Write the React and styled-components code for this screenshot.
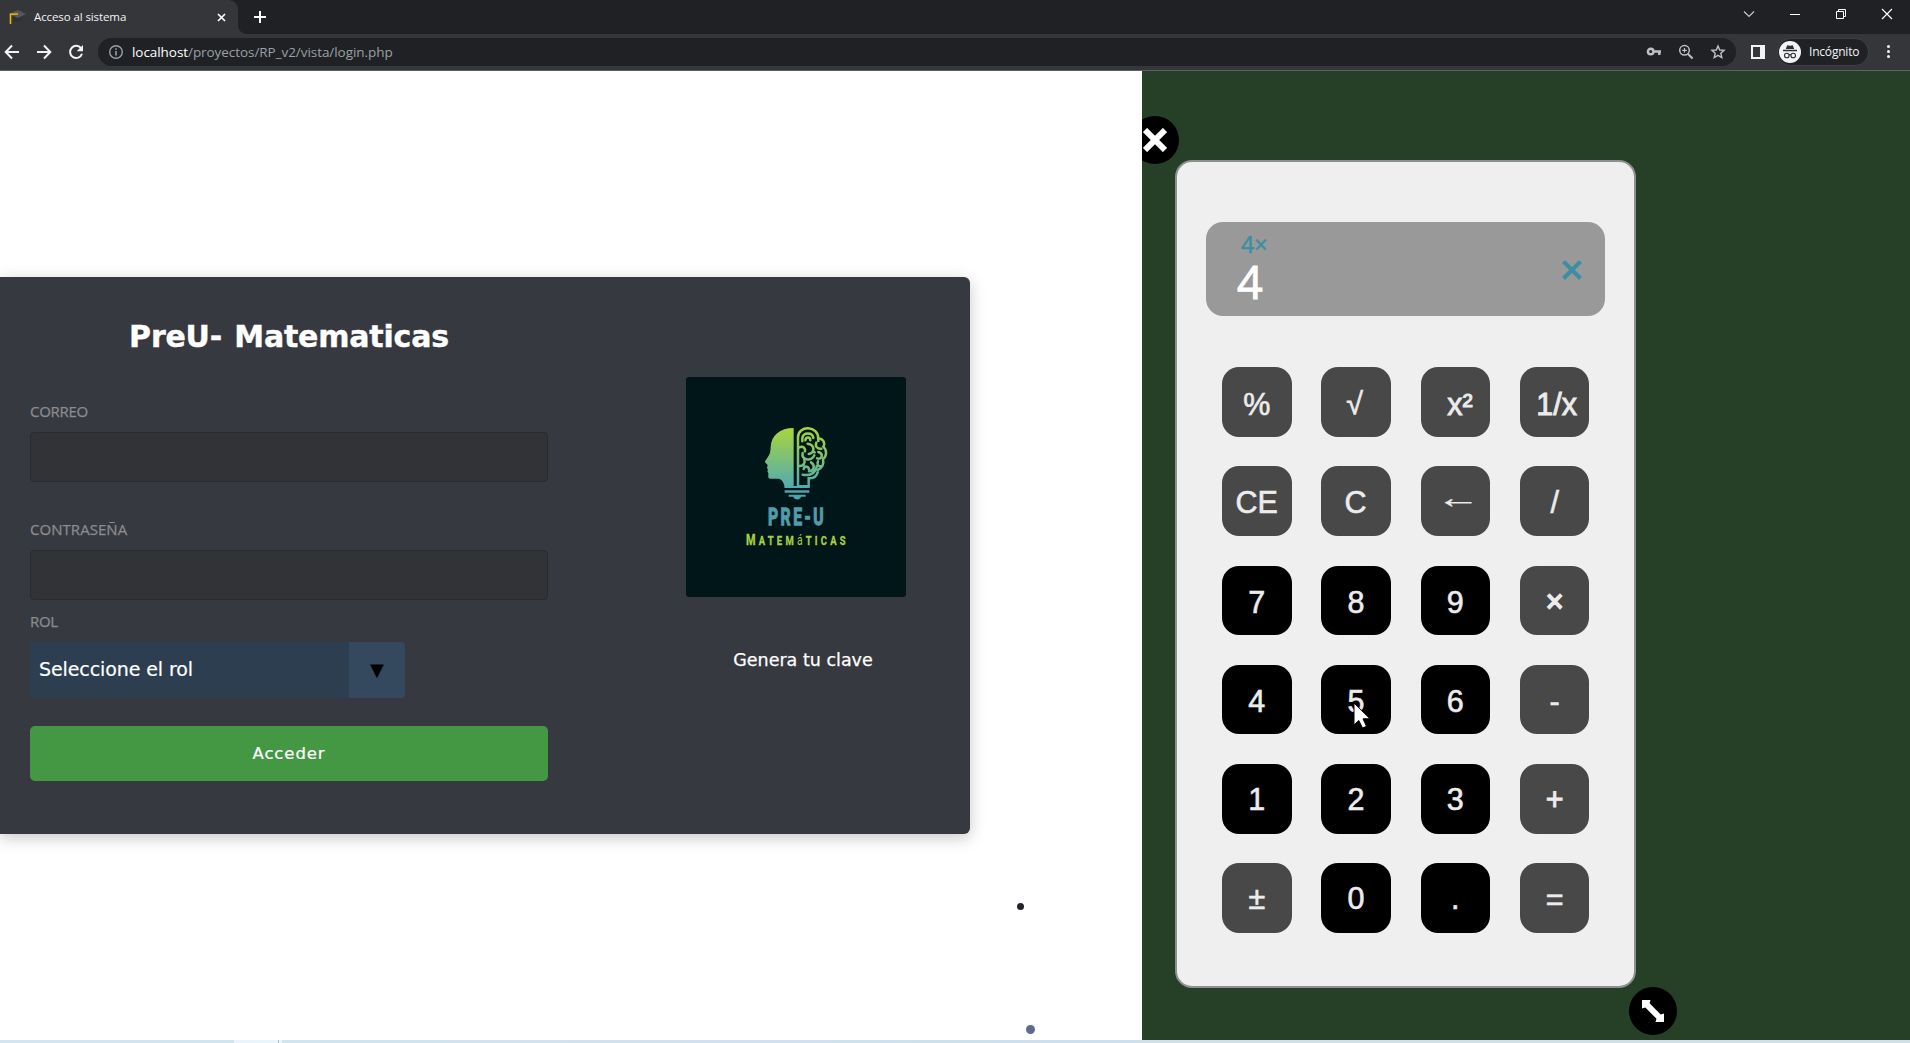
import React from "react";
import styled, { createGlobalStyle } from "styled-components";

const uiFont = `"Open Sans", "Noto Sans", sans-serif`;
const wideFont = `"DejaVu Sans", "Liberation Sans", sans-serif`;

const GlobalStyle = createGlobalStyle`
  * { box-sizing: border-box; }
  body { margin: 0; background: #fff; overflow: hidden; }
  svg { display: block; flex: none; }
  button { font: inherit; border: 0; padding: 0; margin: 0; }
`;

const Window = styled.div`
  display: grid;
  grid-template-rows: 34px 37px 1fr 3px;
  width: 1910px;
  height: 1043px;
  overflow: hidden;
  font-family: ${uiFont};
`;

/* Browser chrome */
const TabStrip = styled.header`
  display: flex;
  align-items: stretch;
  background: #202124;
`;
const Tab = styled.div`
  position: relative;
  display: flex;
  align-items: center;
  width: 238px;
  padding: 0 12px 0 8px;
  background: #35363a;
  border-radius: 0 9px 0 0;
  &::after {
    content: "";
    position: absolute;
    left: 100%;
    bottom: 0;
    width: 8px;
    height: 8px;
    background: radial-gradient(circle at 100% 0, transparent 7.5px, #35363a 8px);
  }
`;
const TabTitle = styled.span`
  flex: 1;
  margin-left: 8px;
  color: #f1f3f4;
  font-size: 11.5px;
  letter-spacing: -0.1px;
  line-height: 16px;
  white-space: nowrap;
`;
const NewTab = styled.div`
  display: flex;
  align-items: center;
  margin-left: 16px;
`;
const WindowControls = styled.div`
  display: flex;
  align-items: flex-start;
  margin-left: auto;
`;
const Control = styled.div`
  display: flex;
  justify-content: center;
  width: 46px;
  padding-top: 8px;
`;

const Toolbar = styled.div`
  display: flex;
  align-items: center;
  padding: 0 14px 1px 4px;
  background: #35363a;
  border-bottom: 1px solid #5f6064;
`;
const NavIcons = styled.div`
  display: flex;
  gap: 16px;
  width: 94px;
`;
const Omnibox = styled.div`
  display: flex;
  align-items: center;
  width: 1638px;
  height: 28px;
  padding: 0 10px;
  border-radius: 14px;
  background: #202124;
`;
const Url = styled.span`
  flex: 1;
  margin-left: 8px;
  color: #9aa0a6;
  font-size: 13.5px;
  letter-spacing: -0.06px;
  line-height: 20px;
  & > b { color: #fff; font-weight: 400; }
`;
const OmniActions = styled.div`
  display: flex;
  gap: 16px;
`;
const PanelIcon = styled.div`
  width: 14px;
  height: 14px;
  margin: 0 12px 0 15px;
  border: 2px solid #f1f3f4;
  border-right-width: 5px;
`;
const Incognito = styled.div`
  display: flex;
  align-items: center;
  gap: 8px;
  width: 92px;
  height: 28px;
  padding-left: 1px;
  border: 1px solid #3e3f43;
  border-radius: 14px;
  background: #202124;
  color: #f1f3f4;
  font-size: 12px;
  letter-spacing: -0.2px;
`;
const MenuDots = styled.div`
  display: grid;
  gap: 2px;
  margin-left: 18px;
  & > i { width: 3px; height: 3px; border-radius: 50%; background: #f1f3f4; }
`;

/* Page */
const Page = styled.main`
  display: grid;
  grid-template-columns: 1142px 1fr;
  min-height: 0;
`;
const LoginArea = styled.section`
  position: relative;
  padding-top: 206px;
  background: #fff;
  overflow: hidden;
`;
const Particle = styled.i`
  position: absolute;
  left: ${(p) => p.$x}px;
  top: ${(p) => p.$y}px;
  width: ${(p) => p.$size}px;
  height: ${(p) => p.$size}px;
  border-radius: 50%;
  background: ${(p) => p.$color};
`;
const Card = styled.div`
  display: flex;
  justify-content: space-between;
  width: 970px;
  height: 557px;
  padding: 0 64px 0 30px;
  border-radius: 0 6px 6px 0;
  background: #373941;
  box-shadow: 0 4px 16px rgba(0, 0, 0, 0.22);
`;
const Form = styled.form`
  width: 518px;
  padding-top: 40px;
`;
const Title = styled.h1`
  margin: 0 0 45px;
  color: #fff;
  font: 700 30px/40px ${wideFont};
  letter-spacing: -0.2px;
  word-spacing: 2px;
  text-align: center;
  -webkit-text-stroke: 0.4px #fff;
`;
const Label = styled.label`
  display: block;
  height: 18px;
  margin-bottom: ${(p) => p.$gap}px;
  color: #8b8c8f;
  font-size: 15px;
  line-height: 18px;
  letter-spacing: ${(p) => p.$spacing}px;
  -webkit-text-stroke: 0.25px #8b8c8f;
`;
const Input = styled.input`
  display: block;
  width: 100%;
  height: 50px;
  margin-bottom: ${(p) => p.$after}px;
  border: 1px solid #2a2b2e;
  border-radius: 4px;
  background: #323337;
  outline: none;
`;
const Select = styled.div`
  display: flex;
  width: 375px;
  height: 56px;
  border-radius: 4px;
  overflow: hidden;
  background: #2d3e50;
  color: #fff;
  font: 19px/55px ${wideFont};
`;
const SelectValue = styled.span`
  flex: 1;
  padding-left: 9px;
  letter-spacing: -0.1px;
  -webkit-text-stroke: 0.2px #fff;
`;
const SelectArrow = styled.span`
  width: 56px;
  background: #34495e;
  color: #000;
  font-size: 18px;
  text-align: center;
`;
const Submit = styled.button`
  width: 100%;
  height: 55px;
  margin-top: 28px;
  border-radius: 5px;
  background: #449844;
  color: #fff;
  font: 16.5px/55px ${wideFont};
  letter-spacing: 0.9px;
  -webkit-text-stroke: 0.2px #fff;
`;
const Brand = styled.aside`
  display: flex;
  flex-direction: column;
  align-items: center;
  width: 220px;
  padding-top: 100px;
`;
const LogoTile = styled.div`
  width: 220px;
  height: 220px;
  border-radius: 3px;
  background: #001618;
  overflow: hidden;
`;
const KeyLink = styled.span`
  margin: 51px 0 0 14px;
  color: #fff;
  font: 17.5px/24px ${wideFont};
  white-space: nowrap;
  -webkit-text-stroke: 0.25px #fff;
`;

/* Calculator */
const Board = styled.section`
  position: relative;
  padding: 89px 0 0 33px;
  background: #263f27;
  overflow: hidden;
`;
const Calculator = styled.div`
  width: 461px;
  height: 828px;
  padding: 59.5px 28.5px 0 29px;
  border: 2px solid #8d918d;
  border-radius: 17px;
  background: #efefef;
`;
const Display = styled.div`
  display: flex;
  justify-content: space-between;
  width: 399px;
  height: 94px;
  padding: 0 22px 0 31px;
  border-radius: 17px;
  background: #999;
`;
const Readout = styled.div`
  display: flex;
  flex-direction: column;
`;
const Operation = styled.span`
  height: 39px;
  padding: 6px 0 0 4px;
  color: #3c8fa3;
  font-size: 23px;
  line-height: 33px;
  -webkit-text-stroke: 0.5px #3c8fa3;
`;
const Value = styled.span`
  height: 41px;
  color: #fff;
  font: 45px/42px ${uiFont};
  -webkit-text-stroke: 1px #fff;
`;
const Clear = styled.div`
  padding-top: 37.5px;
`;
const Keys = styled.div`
  display: grid;
  grid-template-columns: repeat(4, 69.5px);
  grid-auto-rows: 69.5px;
  gap: 29.8px;
  margin: 51.5px 0 0 16px;
`;
const Key = styled.button`
  display: block;
  padding: 1px ${(p) => p.$right || 0}px 0 ${(p) => p.$left || 0}px;
  border-radius: 17px;
  background: ${(p) => (p.$digit ? "#000" : "#484848")};
  color: #ececec;
  font: 30.5px/${(p) => p.$line || 70}px "Liberation Sans", Arial, sans-serif;
  text-align: center;
  -webkit-text-stroke: ${(p) => p.$stroke || 0.6}px #ececec;
  white-space: nowrap;
`;
const WideGlyph = styled.span`
  display: inline-block;
  transform: translateY(-5px) scaleX(1.45);
`;
const Handle = styled.div`
  position: absolute;
  left: ${(p) => p.$x}px;
  top: ${(p) => p.$y}px;
  display: grid;
  place-items: center;
  width: 48px;
  height: 48px;
  border-radius: 50%;
  background: #000;
`;
const Pointer = styled.svg`
  position: absolute;
  left: 211px;
  top: 631px;
`;

const Taskbar = styled.footer`
  background: linear-gradient(90deg, #d0e7ef, #d0dfeb 60%);
`;
const TaskItem = styled.div`
  width: 48px;
  height: 3px;
  margin-left: 234px;
  background: linear-gradient(90deg, #e9f5fa 44px, #a9bfcb 44px, #a9bfcb 45px, #e9f5fa 45px);
`;

const keys = [
  { t: "%", line: 73 }, { t: "√", right: 3, line: 70 }, { t: "x²", left: 9, line: 73, stroke: 0.9 }, { t: "1/x", left: 4, line: 73, stroke: 0.9 },
  { t: "CE" }, { t: "C", right: 1 }, { t: "←", left: 6, wide: true, stroke: 0.2 }, { t: "/" },
  { t: "7", d: 1 }, { t: "8", d: 1 }, { t: "9", d: 1 }, { t: "×", stroke: 1.6, line: 69 },
  { t: "4", d: 1 }, { t: "5", d: 1 }, { t: "6", d: 1 }, { t: "-" },
  { t: "1", d: 1, line: 68 }, { t: "2", d: 1, line: 68 }, { t: "3", d: 1, line: 68 }, { t: "+", line: 68, stroke: 0.9 },
  { t: "±", line: 69 }, { t: "0", d: 1, line: 69 }, { t: ".", d: 1, line: 69 }, { t: "=", line: 68 },
];

const GradCap = () => (
  <svg width="18" height="16" viewBox="0 0 18 16">
    <path d="M5 7v4c2 2 7 2 9 0V7z" fill="#303136" />
    <path d="M1 5 10 1l8 4-8 4z" fill="#56575a" />
    <path d="M10 5 2.5 5.2V15" stroke="#e9b50b" strokeWidth="1.6" fill="none" />
  </svg>
);
const Cross = ({ size, width, color = "#fff" }) => (
  <svg width={size} height={size} viewBox={`0 0 ${size} ${size}`} stroke={color} strokeWidth={width}>
    <path d={`M1 1 ${size - 1} ${size - 1}M${size - 1} 1 1 ${size - 1}`} />
  </svg>
);
const Arrow = ({ flip }) => (
  <svg width="16" height="16" viewBox="0 0 16 16" fill="none" stroke="#f1f3f4" strokeWidth="2">
    <path d={flip ? "M1 8h13M8 1.5 14.3 8 8 14.5" : "M15 8H2M8 1.5 1.7 8 8 14.5"} />
  </svg>
);

const BrandLogo = () => (
  <svg width="220" height="220" viewBox="-162 -99 660 660">
    <defs>
      <linearGradient id="fade" x1="0" y1="50" x2="0" y2="240" gradientUnits="userSpaceOnUse">
        <stop offset="0" stopColor="#a9d63c" />
        <stop offset="1" stopColor="#4fa9b5" />
      </linearGradient>
    </defs>
    <path fill="url(#fade)" d="M161 54V233H134C133 219 126 207 115 206H91C86 206 84 202 85 197V189L82 184L84 179L81 174L83 165L75 157C74 153 80 147 84 140C91 132 91 124 92 112C93 76 120 54 161 54Z" />
    <g fill="none" stroke="url(#fade)" strokeWidth="7.5" strokeLinecap="round">
      <path strokeLinecap="butt" d="M174 229V82C174 45 236 45 235 87V96M174 229H206V205C221 206 231 198 234 184" />
      <path strokeLinecap="butt" d="M134 231H208" strokeWidth="6" />
      <path d="M234 86C248 84 257 98 250 110C262 121 260 139 249 147C253 163 245 175 233 180" />
      <path d="M187 94V84C190 66 218 66 220 84M196 91C197 80 211 80 211 91" />
      <path d="M178 112C190 107 196 114 195 124M203 101C225 104 226 130 206 132M188 129C182 149 214 157 223 136M229 98C224 109 233 118 244 116M218 124L224 127" />
      <path d="M177 168C192 168 196 158 193 149M235 126C252 132 246 151 231 145M213 157C226 165 223 184 207 184M191 177C194 165 207 170 207 179M188 194C211 199 227 189 230 169" />
      <path d="M234 154C230 164 234 170 242 169" />
    </g>
    <path fill="#4fa3ae" d="M134 241H208V248H134ZM146 254H197V260H183C181 271 163 271 160 260H146Z" />
    <text x="84" y="346" textLength="174" lengthAdjust="spacingAndGlyphs" fill="#529ba9" stroke="#529ba9" strokeWidth="4" fontFamily="Roboto, sans-serif" fontWeight="700" fontSize="74" letterSpacing="12">PRE-U</text>
    <text transform="translate(18 404) scale(0.745 1)" fill="#a5d041" stroke="#a5d041" strokeWidth="1" fontFamily="Roboto, sans-serif" fontWeight="700" fontSize="38" letterSpacing="13"><tspan fontSize="44">M</tspan>ATEM<tspan fontSize="42" fontWeight="400" strokeWidth="0">á</tspan>TICAS</text>
  </svg>
);

export default function App() {
  return (
    <Window>
      <GlobalStyle />
      <TabStrip>
        <Tab>
          <GradCap />
          <TabTitle>Acceso al sistema</TabTitle>
          <Cross size={9} width={1.7} />
        </Tab>
        <NewTab>
          <svg width="12" height="12" viewBox="0 0 12 12" stroke="#fff" strokeWidth="2">
            <path d="M6 0v12M0 6h12" />
          </svg>
        </NewTab>
        <WindowControls>
          <Control>
            <svg width="12" height="12" viewBox="0 0 12 12" fill="none" stroke="#c6c7c9" strokeWidth="1.2"><path d="m1 3.5 5 5 5-5" /></svg>
          </Control>
          <Control>
            <svg width="12" height="12" viewBox="0 0 12 12" stroke="#fff"><path d="M1 6.5h10" /></svg>
          </Control>
          <Control>
            <svg width="12" height="12" viewBox="0 0 12 12" fill="none" stroke="#fff"><path d="M1.5 3.5h7v7h-7zM3.5 3.5v-2h7v7h-2" /></svg>
          </Control>
          <Control>
            <Cross size={12} width={1.2} />
          </Control>
        </WindowControls>
      </TabStrip>

      <Toolbar>
        <NavIcons>
          <Arrow />
          <Arrow flip />
          <svg width="16" height="16" viewBox="0 0 16 16">
            <path d="M13.3 4.6A6.1 6.1 0 1 0 14 9.8" fill="none" stroke="#f1f3f4" strokeWidth="2" />
            <path d="M15 1v6.3H8.7z" fill="#f1f3f4" />
          </svg>
        </NavIcons>
        <Omnibox>
          <svg width="16" height="16" viewBox="0 0 16 16" fill="none" stroke="#9aa0a6" strokeWidth="1.4">
            <circle cx="8" cy="8" r="6.3" /><path d="M8 7v4.5M8 4.3v1.5" strokeWidth="1.6" />
          </svg>
          <Url><b>localhost</b>/proyectos/RP_v2/vista/login.php</Url>
          <OmniActions>
            <svg width="16" height="16" viewBox="0 0 16 16" fill="none" stroke="#bdc1c6">
              <circle cx="4.7" cy="7.5" r="2.8" strokeWidth="2.4" /><path d="M8 7.5h7M13.3 7.5V11" strokeWidth="2.5" />
            </svg>
            <svg width="16" height="16" viewBox="0 0 16 16" fill="none" stroke="#bdc1c6" strokeWidth="1.5">
              <circle cx="6.5" cy="6.3" r="4.8" /><path d="m10 10 4.6 4.5" strokeWidth="2" /><path d="M6.5 4v4.6M4.2 6.3h4.6" strokeWidth="1.2" />
            </svg>
            <svg width="16" height="16" viewBox="0 0 16 16" fill="none" stroke="#bdc1c6" strokeWidth="1.4">
              <path d="m8 2 1.7 4 4.4.4-3.3 2.9 1 4.3L8 11.3l-3.8 2.3 1-4.3-3.3-2.9 4.4-.4z" />
            </svg>
          </OmniActions>
        </Omnibox>
        <PanelIcon />
        <Incognito>
          <svg width="22" height="22" viewBox="0 0 22 22">
            <circle cx="11" cy="11" r="11" fill="#f1f3f4" />
            <path d="M4 8.8h14v1.5H4zM6.8 8 8.2 4.2 11 4.8l2.8-.6L15.2 8z" fill="#303134" />
            <g fill="none" stroke="#303134" strokeWidth="1.1"><circle cx="7.8" cy="14.5" r="2.3" /><circle cx="14.2" cy="14.5" r="2.3" /><path d="M10 14q1-.8 2 0" /></g>
          </svg>
          Incógnito
        </Incognito>
        <MenuDots><i /><i /><i /></MenuDots>
      </Toolbar>

      <Page>
        <LoginArea>
          <Card>
            <Form>
              <Title>PreU- Matematicas</Title>
              <Label $gap={12} $spacing={-0.3}>CORREO</Label>
              <Input $after={38} />
              <Label $gap={12} $spacing={0.05}>CONTRASEÑA</Label>
              <Input $after={12} type="password" />
              <Label $gap={12} $spacing={-0.3}>ROL</Label>
              <Select>
                <SelectValue>Seleccione el rol</SelectValue>
                <SelectArrow>▼</SelectArrow>
              </Select>
              <Submit type="button">Acceder</Submit>
            </Form>
            <Brand>
              <LogoTile><BrandLogo /></LogoTile>
              <KeyLink>Genera tu clave</KeyLink>
            </Brand>
          </Card>
          <Particle $x={1017} $y={832} $size={7} $color="#232329" />
          <Particle $x={1026} $y={953.5} $size={9} $color="#5f6b8e" />
        </LoginArea>

        <Board>
          <Calculator>
            <Display>
              <Readout>
                <Operation>4×</Operation>
                <Value>4</Value>
              </Readout>
              <Clear>
                <svg width="22" height="22" viewBox="0 0 22 22" stroke="#3c8fa3" strokeWidth="4">
                  <path d="m2.5 2.5 17 17M19.5 2.5l-17 17" />
                </svg>
              </Clear>
            </Display>
            <Keys>
              {keys.map((k) => (
                <Key key={k.t} $digit={k.d} $left={k.left} $right={k.right} $line={k.line} $stroke={k.stroke}>
                  {k.wide ? <WideGlyph>{k.t}</WideGlyph> : k.t}
                </Key>
              ))}
            </Keys>
          </Calculator>
          <Handle $x={-11} $y={45}>
            <svg width="24" height="24" viewBox="0 0 24 24" stroke="#fff" strokeWidth="6">
              <path d="m2 2 20 20M22 2 2 22" />
            </svg>
          </Handle>
          <Handle $x={487} $y={915.5}>
            <svg width="24" height="24" viewBox="0 0 24 24" fill="#fff">
              <path d="M1 1h8.5L8.600 4.300 19.700 15.400 23 14.500V23h-8.500l1-3.300L4.300 8.600 1 9.500z" />
            </svg>
          </Handle>
          <Pointer width="18" height="28" viewBox="0 0 18 28">
            <path d="M1 1v22l4.800-4.500L9.500 26l4-1.700-3.500-7.500H17z" fill="#fff" stroke="#000" strokeWidth="1" />
          </Pointer>
        </Board>
      </Page>
      <Taskbar><TaskItem /></Taskbar>
    </Window>
  );
}
